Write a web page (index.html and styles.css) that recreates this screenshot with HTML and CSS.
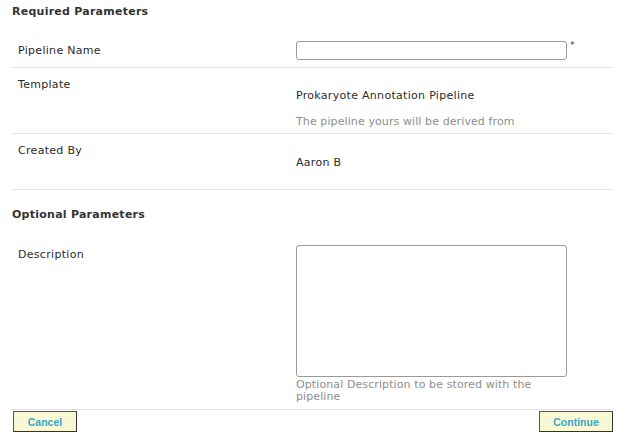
FILE: index.html
```html
<!DOCTYPE html>
<html>
<head>
<meta charset="utf-8">
<link rel="stylesheet" href="styles.css">
</head>
<body>
<div class="page">
  <h2 class="section-title">Required Parameters</h2>

  <div class="field field--input">
    <div class="field-label">Pipeline Name</div>
    <div class="field-value field-value--inline">
      <input class="text-input" type="text">
      <span class="required">*</span>
    </div>
  </div>

  <div class="field field--template">
    <div class="field-label">Template</div>
    <div class="field-value">
      <div class="value-text">Prokaryote Annotation Pipeline</div>
      <div class="hint hint--spaced">The pipeline yours will be derived from</div>
    </div>
  </div>

  <div class="field field--creator">
    <div class="field-label">Created By</div>
    <div class="field-value">
      <div class="value-text">Aaron B</div>
    </div>
  </div>

  <h2 class="section-title section-title--optional">Optional Parameters</h2>

  <div class="field field--textarea">
    <div class="field-label">Description</div>
    <div class="field-value">
      <textarea class="text-area"></textarea>
      <div class="hint hint--tight">Optional Description to be stored with the pipeline</div>
    </div>
  </div>

  <div class="actions">
    <button class="btn btn--cancel" type="button">Cancel</button>
    <button class="btn btn--continue" type="button">Continue</button>
  </div>
</div>
</body>
</html>
```

FILE: styles.css
```css
html, body {
  margin: 0;
  padding: 0;
  background: #ffffff;
}

body {
  font-family: "DejaVu Sans", Verdana, sans-serif;
  font-size: 11px;
  line-height: 14px;
  letter-spacing: 0.3px;
  color: #2b2b2b;
}

.page {
  padding: 0 5px 0 12px;
}

.section-title {
  margin: 0;
  font-size: 11px;
  line-height: 14px;
  font-weight: bold;
  letter-spacing: 0.25px;
  color: #333333;
  padding: 5px 0 15px 0;
}

.section-title--optional {
  padding: 18px 0 15px 0;
}

.field {
  display: grid;
  grid-template-columns: 284px 1fr;
  border-bottom: 1px solid #e4e4e4;
}

.field-label {
  padding-left: 6px;
  color: #2b2b2b;
}

.field-value--inline {
  display: flex;
  align-items: flex-start;
}

.field--input {
  padding: 7px 0 7px 0;
  align-items: center;
}

.text-input {
  box-sizing: border-box;
  width: 271px;
  height: 19px;
  margin: 0;
  padding: 0 3px;
  border: 1px solid #9a9a9a;
  border-radius: 3px;
  background: #ffffff;
  font: inherit;
  outline: none;
}

.required {
  font-size: 9px;
  line-height: 9px;
  margin-left: 3px;
  margin-top: 0;
  color: #333333;
}

.field--template .field-label {
  padding-top: 10px;
}

.field--template .field-value {
  padding: 21px 0 4px 0;
}

.field--creator .field-label {
  padding-top: 10px;
}

.field--creator .field-value {
  padding: 22px 0 19px 0;
}

.value-text {
  color: #2b2b2b;
}

.hint {
  color: #8e8e8e;
  max-width: 270px;
  letter-spacing: 0.1px;
}

.hint--spaced {
  margin-top: 12px;
}

.hint--tight {
  margin-top: 2px;
  line-height: 12px;
}

.field--textarea {
  padding: 8px 0 6px 0;
}

.field--textarea .field-label {
  padding-top: 3px;
}

.text-area {
  display: block;
  box-sizing: border-box;
  width: 271px;
  height: 132px;
  margin: 0;
  padding: 2px;
  border: 1px solid #9a9a9a;
  border-radius: 3px;
  resize: none;
  font: inherit;
  outline: none;
}

.actions {
  display: flex;
  justify-content: space-between;
  padding: 1px 1px 0 1px;
}

.btn {
  box-sizing: border-box;
  height: 21px;
  margin: 0;
  padding: 0;
  background: #f8f8d4;
  border: 1px solid #333333;
  border-top-color: #555555;
  border-left-color: #555555;
  font-family: "Liberation Sans", Arial, sans-serif;
  font-size: 10.5px;
  font-weight: bold;
  letter-spacing: 0;
  color: #3aa6c6;
  cursor: pointer;
}

.btn--cancel {
  width: 64px;
}

.btn--continue {
  width: 74px;
}
```
